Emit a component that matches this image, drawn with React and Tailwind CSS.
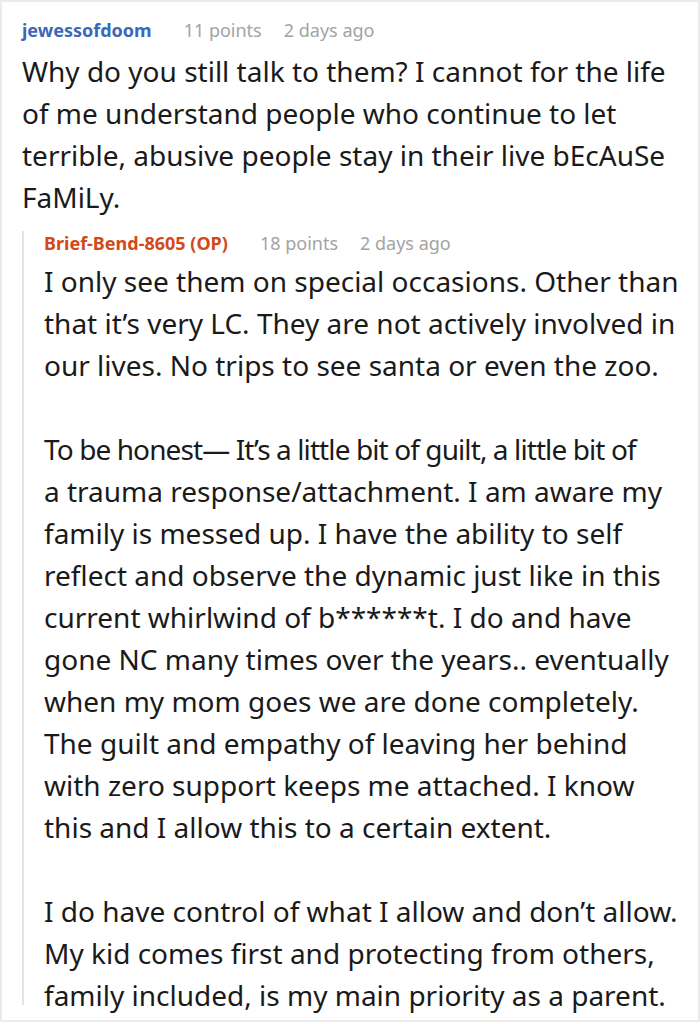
const comment = {
  author: "jewessofdoom",
  points: "11 points",
  time: "2 days ago",
};

const reply = {
  author: "Brief-Bend-8605 (OP)",
  points: "18 points",
  time: "2 days ago",
};

function Meta({ author, points, time, authorClass }) {
  return (
    <div className="flex items-center text-[18px] leading-6 whitespace-nowrap">
      <span className={`font-bold ${authorClass}`}>{author}</span>
      <span className="ml-8 text-[#a3a3a3]">{points}</span>
      <span className="ml-[22px] text-[#a3a3a3]">{time}</span>
    </div>
  );
}

export default function App() {
  return (
    <div
      className="w-[700px] h-[1024px] overflow-hidden bg-white"
      style={{ fontFamily: '"Noto Sans", "Open Sans", sans-serif' }}
    >
      <div className="h-[1022px] overflow-hidden border-2 border-[#ebebeb] pl-5 pt-4 pr-3 text-[#1a1a1b]">
        <Meta {...comment} authorClass="text-[#3a68b8]" />
        <div className="mt-2 text-[28px] leading-[42px]">
          <p>
            Why do you still talk to them? I cannot for the life of me understand people who
            continue to let terrible, abusive people stay in their live bEcAuSe FaMiLy.
          </p>
        </div>

        {/* reply thread */}
        <div className="mt-[13px] h-[774px] border-l-2 border-[#e4e4e4] pl-5">
          <Meta {...reply} authorClass="text-[#d24a17]" />
          <div className="mt-[5px] flex flex-col gap-[42px] text-[28px] leading-[42px]">
            <p>
              I only see them on special occasions. Other than that it’s very LC. They are not
              actively involved in our lives. No trips to see santa or even the zoo.
            </p>
            <p>
              <span className="tracking-[-0.9px]">
                To be honest— It’s a little bit of guilt, a little bit of
              </span>
              <br />
              a trauma response/attachment. I am aware my family is messed up. I have the ability
              to self reflect and observe the dynamic just like in this current whirlwind of
              b******t. I do and have gone NC many times over the years.. eventually when my mom
              goes we are done completely. The guilt and empathy of leaving her behind with zero
              support keeps me attached. I know this and I allow this to a certain extent.
            </p>
            <p>
              I do have control of what I allow and don’t allow. My kid comes first and protecting
              from others, family included, is my main priority as a parent.
            </p>
          </div>
        </div>
      </div>
    </div>
  );
}
